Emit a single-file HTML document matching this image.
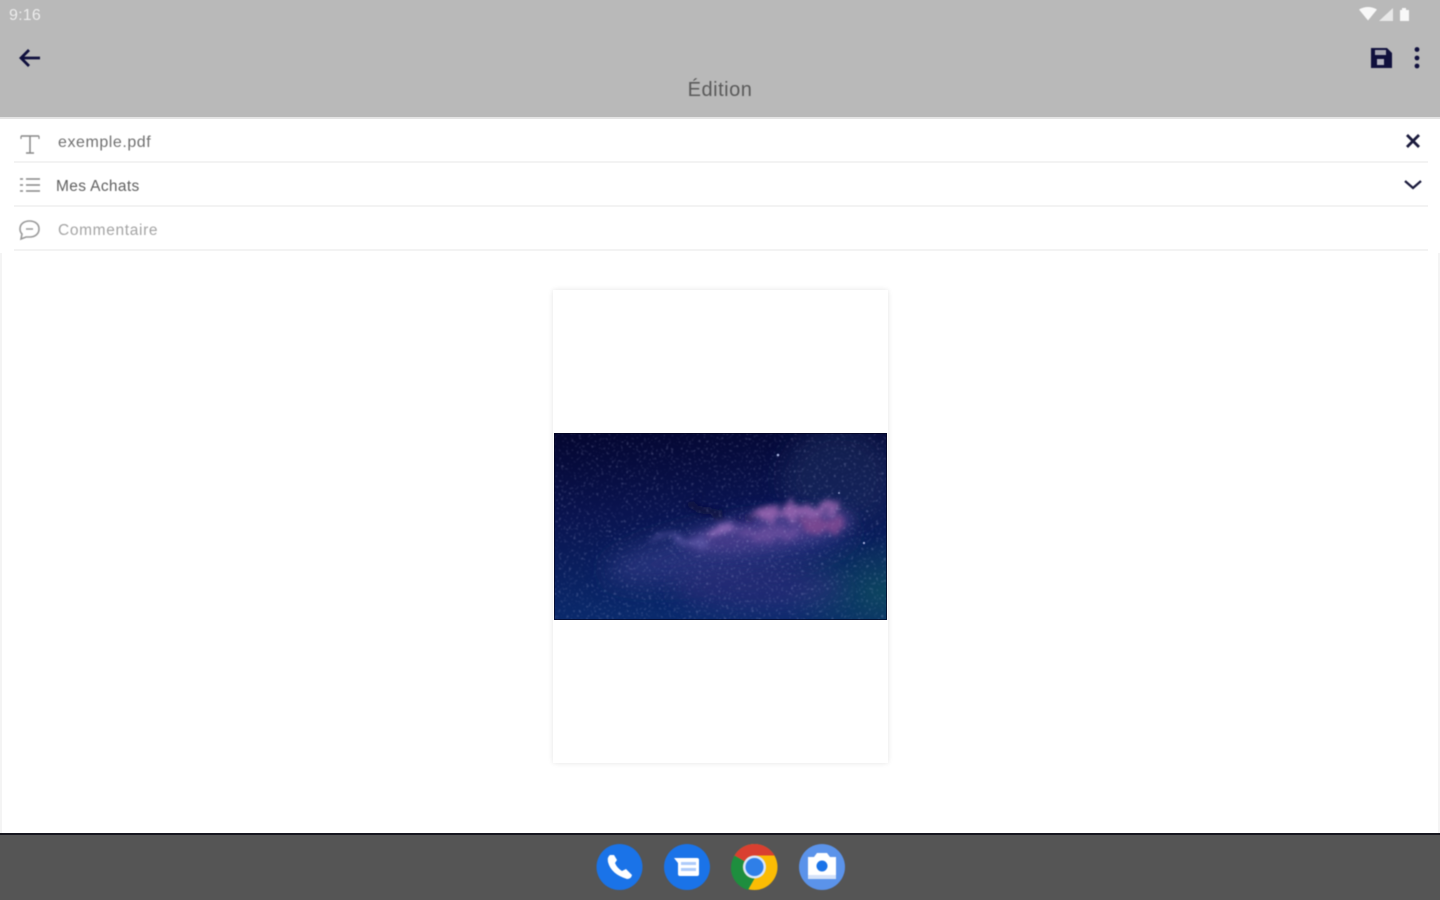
<!DOCTYPE html>
<html><head><meta charset="utf-8"><style>
html,body{margin:0;padding:0;width:1440px;height:900px;overflow:hidden;background:#fff;font-family:"Liberation Sans",sans-serif}
.a{position:absolute}
.t{position:absolute;white-space:nowrap;filter:blur(.6px)}
</style></head><body>
<div class="a" style="left:0;top:0;width:1440px;height:117px;background:#b9b9b9"></div>
<div class="a" style="left:0;top:117px;width:1440px;height:2px;background:#e4e4e4"></div>
<div class="t" style="left:9px;top:7px;font-size:16px;letter-spacing:.2px;color:#ececec">9:16</div>
<svg class="a" style="left:1355px;top:5px;filter:blur(.5px)" width="60" height="18"><path d="M4 4.500Q13-.5 22 4.500L13 15.500Z" fill="#f8f8f8"/><path d="M38 3V16H24Z" fill="#e8e8e8"/><path d="M45 5H47V3H51V5H54V16H45Z" fill="#f8f8f8"/></svg>
<svg class="a" style="left:16px;top:44px;filter:blur(.5px)" width="28" height="28"><path d="M24 14H5M13 6L5 14L13 22" fill="none" stroke="#0f0f3d" stroke-width="2.800"/></svg>
<svg class="a" style="left:1369px;top:46px;filter:blur(.5px)" width="24" height="24"><path d="M2 2H18L23 7V22H2Z" fill="#10103d"/><rect x="6" y="4" width="11" height="5" fill="#a9a9b4"/><rect x="8" y="13" width="7" height="6" fill="#b4b4c0"/></svg>
<svg class="a" style="left:1410px;top:46px;filter:blur(.5px)" width="14" height="24"><circle cx="7" cy="3.500" r="2.400" fill="#10103d"/><circle cx="7" cy="12" r="2.400" fill="#10103d"/><circle cx="7" cy="20" r="2.400" fill="#10103d"/></svg>
<div class="t" style="left:0;width:1440px;text-align:center;top:79px;font-size:20px;letter-spacing:.5px;color:#5a5a5a">Édition</div>

<svg class="a" style="left:16px;top:130px;filter:blur(.5px)" width="28" height="28"><path d="M5 6H23M14 6V23M10 23H18" fill="none" stroke="#888" stroke-width="1.500"/><path d="M5 6V9M23 6V9" stroke="#888" stroke-width="1.200"/></svg>
<div class="t" style="left:58px;top:134px;font-size:16px;letter-spacing:.55px;color:#707070">exemple.pdf</div>
<svg class="a" style="left:1403px;top:131px;filter:blur(.5px)" width="20" height="20"><path d="M4 4L16 16M16 4L4 16" stroke="#1b1b3d" stroke-width="2.800"/></svg>
<div class="a" style="left:14px;top:161px;width:1414px;height:2px;background:#f3f3f3"></div>

<svg class="a" style="left:18px;top:176px;filter:blur(.5px)" width="24" height="20"><path d="M2 3H5M8 3H22M2 9H5M8 9H22M2 15H5M8 15H22" stroke="#888" stroke-width="1.500"/></svg>
<div class="t" style="left:56px;top:178px;font-size:15.500px;letter-spacing:.35px;color:#606060">Mes Achats</div>
<svg class="a" style="left:1402px;top:178px;filter:blur(.5px)" width="22" height="14"><path d="M3 3L11 10L19 3" fill="none" stroke="#1b1b3d" stroke-width="2.300"/></svg>
<div class="a" style="left:14px;top:205px;width:1414px;height:2px;background:#f3f3f3"></div>

<svg class="a" style="left:17px;top:218px;filter:blur(.5px)" width="26" height="24"><path d="M12.500 3C18 3 22 6 22 11S18 19 12.500 19H9L4 21L5 16Q3 14 3 11C3 6 7 3 12.500 3Z" fill="none" stroke="#999" stroke-width="1.600"/><path d="M9 11H16" stroke="#999" stroke-width="1.500"/></svg>
<div class="t" style="left:58px;top:222px;font-size:15.500px;letter-spacing:.65px;color:#a4a4a4">Commentaire</div>
<div class="a" style="left:14px;top:249px;width:1414px;height:2px;background:#f3f3f3"></div>
<div class="a" style="left:0;top:253px;width:2px;height:580px;background:#f4f4f4"></div>
<div class="a" style="right:0;top:253px;width:2px;height:580px;background:#f4f4f4"></div>

<div class="a" style="left:553px;top:290px;width:335px;height:473px;background:#fff;box-shadow:0 0 5px rgba(0,0,0,.11)"></div>
<svg class="a" style="left:554px;top:433px" width="333" height="187" viewBox="0 0 333 187">
<defs>
<linearGradient id="bg" x1="0" y1="0" x2="0.150" y2="1"><stop offset="0" stop-color="#040630"/><stop offset=".45" stop-color="#0a1450"/><stop offset="1" stop-color="#0a2a6c"/></linearGradient>
<radialGradient id="teal" cx="1" cy=".85" r=".32"><stop offset="0" stop-color="#0d4d5a" stop-opacity=".75"/><stop offset="1" stop-color="#0d4d5a" stop-opacity="0"/></radialGradient>
<filter id="b1" x="-50%" y="-100%" width="200%" height="300%"><feGaussianBlur stdDeviation="12"/></filter>
<filter id="w" x="-20%" y="-60%" width="140%" height="220%"><feTurbulence type="fractalNoise" baseFrequency=".09" numOctaves="3" seed="11" result="t"/><feDisplacementMap in="SourceGraphic" in2="t" scale="22" xChannelSelector="R" yChannelSelector="G"/><feGaussianBlur stdDeviation="3"/></filter>
<filter id="b2" x="-50%" y="-100%" width="200%" height="300%"><feGaussianBlur stdDeviation="6"/></filter>
<filter id="b4"><feGaussianBlur stdDeviation=".6"/></filter>
<filter id="n" x="0" y="0" width="100%" height="100%"><feTurbulence type="fractalNoise" baseFrequency=".4" numOctaves="2" seed="7"/><feColorMatrix values="0 0 0 0 .65  0 0 0 0 .68  0 0 0 0 .95  5 0 0 0 -3"/><feGaussianBlur stdDeviation=".7"/></filter>
<clipPath id="c"><rect width="333" height="187"/></clipPath>
</defs>
<g clip-path="url(#c)">
<rect width="333" height="187" fill="url(#bg)"/>
<rect width="333" height="187" fill="url(#teal)"/>
<ellipse cx="285" cy="45" rx="55" ry="50" fill="#1d2f5e" opacity=".55" filter="url(#b1)"/>
<ellipse cx="175" cy="118" rx="125" ry="26" fill="#29357f" opacity=".85" filter="url(#b1)" transform="rotate(-10 175 118)"/>
<ellipse cx="205" cy="155" rx="85" ry="22" fill="#312f7c" opacity=".6" filter="url(#b1)"/>
<ellipse cx="215" cy="98" rx="85" ry="17" fill="#4c3e8e" opacity=".8" filter="url(#b2)" transform="rotate(-9 215 98)"/>
<g filter="url(#w)">
<ellipse cx="240" cy="78" rx="44" ry="7" fill="#a56cb8" opacity=".8" transform="rotate(-5 240 78)"/>
<ellipse cx="268" cy="92" rx="24" ry="9" fill="#844b92" opacity=".8"/>
<ellipse cx="215" cy="100" rx="30" ry="7" fill="#6d4f9f" opacity=".75"/>
<ellipse cx="130" cy="108" rx="32" ry="4" fill="#5d57a8" opacity=".8" transform="rotate(10 130 108)"/>
<ellipse cx="165" cy="98" rx="14" ry="4" fill="#9a72c0" opacity=".85" transform="rotate(-20 165 98)"/>
<ellipse cx="150" cy="76" rx="22" ry="6" fill="#0b0e3a" opacity=".75" transform="rotate(12 150 76)"/>
<ellipse cx="195" cy="84" rx="14" ry="3" fill="#14164a" opacity=".7"/>
</g>
<rect width="333" height="187" filter="url(#n)" opacity=".28"/>
<g fill="#aab4e0" filter="url(#b4)"><circle cx="224" cy="22" r="1.300"/><circle cx="310" cy="110" r="1.100"/><circle cx="285" cy="60" r=".9"/></g>
<rect x=".5" y=".5" width="332" height="186" fill="none" stroke="#03041f" stroke-width="1" opacity=".7"/>
</g></svg>

<div class="a" style="left:0;top:833px;width:1440px;height:67px;background:#555"></div>
<div class="a" style="left:0;top:833px;width:1440px;height:2px;background:#17171f"></div>

<svg class="a" style="left:590px;top:838px;filter:blur(.6px)" width="260" height="58" viewBox="0 0 260 58">
<circle cx="29.500" cy="29" r="23" fill="#1a73e8"/>
<path d="M20 17Q17 19 18 24Q21 36 37 41Q41 41 42 37L36 31L32 33Q27 30 25 25L27 22L24 17Z" fill="#fff"/>
<circle cx="97" cy="29" r="23" fill="#1a73e8"/>
<path d="M84 20H107Q109 20 109 22V36Q109 38 107 38H90Q88 38 88 36V25Z" fill="#fff"/>
<path d="M91 24H106V27H91ZM91 30H106V33H91Z" fill="#aecbfa"/>
<circle cx="164.500" cy="29" r="23" fill="#fbbc04"/>
<path d="M164.500 6A23 23 0 0 1 184.500 17.500H164.500A11.500 11.500 0 0 0 154.500 23.200L144.500 17.500A23 23 0 0 1 164.500 6Z" fill="#d93f30"/>
<path d="M144.500 17.500L154.500 23.200A11.500 11.500 0 0 0 164.500 40.500L158 52A23 23 0 0 1 144.500 17.500Z" fill="#1e8e3e"/>
<circle cx="164.500" cy="29" r="11.500" fill="#d8e6fb"/><circle cx="164.500" cy="29" r="9" fill="#2f7fe8"/>
<circle cx="232" cy="29" r="23" fill="#5b93ea"/>
<path d="M218 19H224L227 15H237L240 19H246V41H218Z" fill="#fff"/>
<path d="M218 37H246V41H218Z" fill="#d5e2f8"/>
<circle cx="232" cy="28" r="5.500" fill="#1a73e8"/>
</svg>
</body></html>
